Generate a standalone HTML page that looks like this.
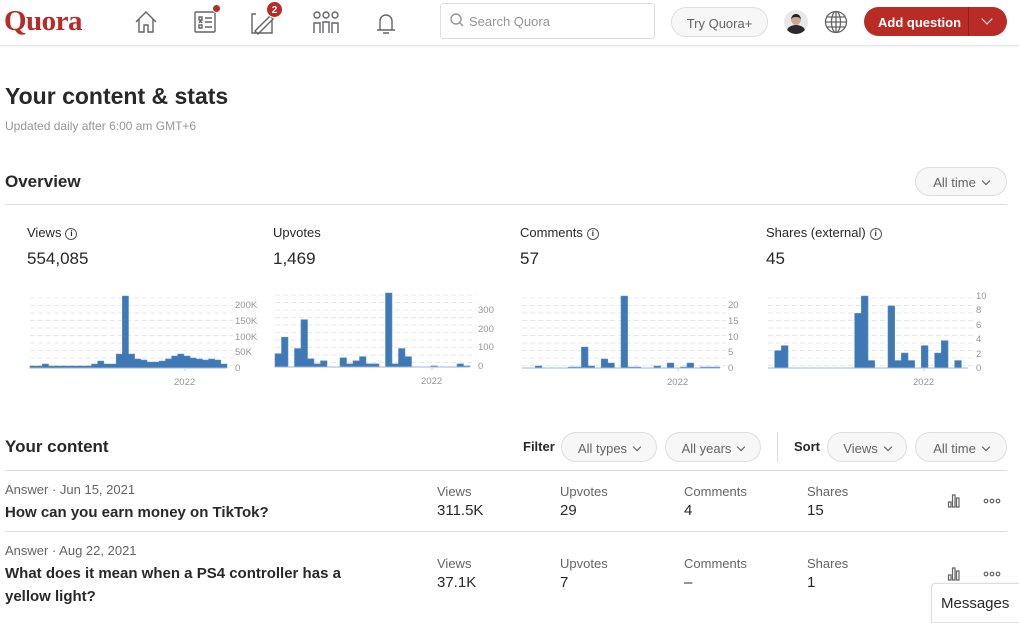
<!DOCTYPE html>
<html><head><meta charset="utf-8">
<style>
*{margin:0;padding:0;box-sizing:border-box}
body{width:1019px;height:615px;overflow:hidden;background:#fff;font-family:"Liberation Sans",sans-serif;color:#282829;position:relative}
.a{position:absolute}
.hdr{position:absolute;left:0;top:0;width:1019px;height:46px;border-bottom:1px solid #e6e6e6;box-shadow:0 1px 2px rgba(0,0,0,.05)}
.logo{left:4px;top:5px;font-family:"Liberation Serif",serif;font-weight:bold;font-size:29px;color:#b92b27;letter-spacing:-0.5px}
.search{left:440px;top:3px;width:215px;height:36px;border:1px solid #dedede;border-radius:3px;font-size:13px;color:#939598;padding:10px 0 0 28px}
.pill{border:1px solid #dedede;border-radius:18px;background:#f7f7f7;font-size:13px;color:#636466;text-align:center}
.addq{left:864px;top:7px;width:143px;height:29px;border-radius:15px;background:#b92b27;color:#fff;font-weight:bold;font-size:13px;padding:8px 0 0 14px}
.h1{left:5px;top:83px;font-size:23px;font-weight:bold}
.sub{left:5px;top:119px;font-size:12px;color:#939598}
.h2{font-size:17px;font-weight:bold}
.line{height:1px;background:#dedede}
.lbl{font-size:13px;color:#282829}
.num{font-size:17px}
.sm{font-size:13px;color:#636466}
.title{font-size:15px;font-weight:bold;line-height:23px}
.axis{font-size:9.5px;fill:#939598;font-family:"Liberation Sans",sans-serif}
.info{display:inline-block;width:12px;height:12px;border:1.3px solid #555;border-radius:50%;font-size:8px;text-align:center;line-height:9px;vertical-align:1px;margin-left:4px;font-weight:bold}
.chev{display:inline-block;width:6px;height:6px;border-right:1.3px solid #555;border-bottom:1.3px solid #555;transform:rotate(45deg);margin:0 0 3px 7px}
</style></head><body>
<div class="hdr">
<div class="a logo">Quora</div>
<svg class="a" style="left:133px;top:8px" width="280" height="30" fill="none" stroke="#636466" stroke-width="1.4">
 <path d="M3 14 L13 4 L23 14 M6 11 V24 H11 V17 H15 V24 H20 V11"/>
 <rect x="62" y="4" width="20" height="20" rx="1"/><path d="M66 9h3v3h-3zM66 17h3v3h-3zM72 10h7M72 14h7M72 19h7M66 15l1.5-2 1.5 2"/>
 <path d="M123 6 H119 V25 H139 V12 M122 23 L137 8 L140 11 L125 26 Z"/>
 <circle cx="184" cy="7" r="3"/><circle cx="193" cy="7" r="3"/><circle cx="202" cy="7" r="3"/><path d="M181 25v-10h6v10M190 25v-11h6v11M199 25v-10h6v10"/>
 <path d="M247 22 V13 a6 6 0 0 1 12 0 V22 H244 H262 M250 25 h6"/>
</svg>
<div class="a" style="left:212px;top:4px;width:9px;height:9px;border-radius:50%;background:#b92b27;border:1px solid #fff"></div>
<div class="a" style="left:266px;top:1px;width:17px;height:17px;border-radius:50%;background:#b92b27;color:#fff;font-size:10px;font-weight:bold;text-align:center;line-height:17px;border:1px solid #fff">2</div>
<div class="a search">Search Quora</div>
<svg class="a" style="left:450px;top:13px" width="14" height="14" fill="none" stroke="#939598" stroke-width="1.4"><circle cx="6" cy="6" r="5"/><path d="M9.5 9.5L13 13"/></svg>
<div class="a pill" style="left:671px;top:7px;width:97px;height:30px;padding-top:8px">Try Quora+</div>
<div class="a" style="left:784px;top:10px;width:24px;height:24px;border-radius:50%;background:#e8e8e8;overflow:hidden"><div style="position:absolute;left:7px;top:4px;width:10px;height:11px;border-radius:50%;background:#c9a894;border-top:3px solid #222"></div><div style="position:absolute;left:3px;top:15px;width:18px;height:12px;border-radius:50%;background:#2a2a2a"></div></div>
<svg class="a" style="left:824px;top:10px" width="24" height="24" fill="none" stroke="#636466" stroke-width="1.3"><circle cx="12" cy="12" r="10.5"/><ellipse cx="12" cy="12" rx="4.5" ry="10.5"/><path d="M1.5 12h21M3.5 7h17M3.5 17h17M12 1.5v21"/></svg>
<div class="a addq">Add question</div>
<div class="a" style="left:968px;top:7px;width:1px;height:29px;background:#8f1f1c"></div>
<div class="a" style="left:983px;top:15px;width:8px;height:8px;border-right:1.5px solid #fff;border-bottom:1.5px solid #fff;transform:rotate(45deg)"></div>
</div>

<div class="a h1">Your content &amp; stats</div>
<div class="a sub">Updated daily after 6:00 am GMT+6</div>
<div class="a h2" style="left:5px;top:172px">Overview</div>
<div class="a pill" style="left:915px;top:167px;width:92px;height:29px;padding-top:7px">All time<span class="chev"></span></div>
<div class="a line" style="left:5px;top:204px;width:1002px"></div>

<div class="a lbl" style="left:27px;top:225px">Views<span class="info">i</span></div>
<div class="a num" style="left:27px;top:249px">554,085</div>
<div class="a lbl" style="left:273px;top:225px">Upvotes</div>
<div class="a num" style="left:273px;top:249px">1,469</div>
<div class="a lbl" style="left:520px;top:225px">Comments<span class="info">i</span></div>
<div class="a num" style="left:520px;top:249px">57</div>
<div class="a lbl" style="left:766px;top:225px">Shares (external)<span class="info">i</span></div>
<div class="a num" style="left:766px;top:249px">45</div>

<svg class="a" id="ch" style="left:0;top:285px" width="1019" height="110"></svg>

<div class="a h2" style="left:5px;top:437px">Your content</div>
<div class="a" style="left:523px;top:439px;font-size:13px;font-weight:bold;color:#282829">Filter</div>
<div class="a pill" style="left:561px;top:432px;width:96px;height:30px;padding-top:8px">All types<span class="chev"></span></div>
<div class="a pill" style="left:665px;top:432px;width:96px;height:30px;padding-top:8px">All years<span class="chev"></span></div>
<div class="a" style="left:777px;top:432px;width:1px;height:30px;background:#dedede"></div>
<div class="a" style="left:794px;top:439px;font-size:13px;font-weight:bold">Sort</div>
<div class="a pill" style="left:827px;top:432px;width:80px;height:30px;padding-top:8px">Views<span class="chev"></span></div>
<div class="a pill" style="left:915px;top:432px;width:92px;height:30px;padding-top:8px">All time<span class="chev"></span></div>
<div class="a line" style="left:5px;top:470px;width:1002px"></div>

<div class="a sm" style="left:5px;top:482px">Answer · Jun 15, 2021</div>
<div class="a title" style="left:5px;top:501px">How can you earn money on TikTok?</div>
<div class="a sm" style="left:437px;top:484px">Views</div><div class="a num" style="left:437px;top:502px;font-size:15px">311.5K</div>
<div class="a sm" style="left:560px;top:484px">Upvotes</div><div class="a num" style="left:560px;top:502px;font-size:15px">29</div>
<div class="a sm" style="left:684px;top:484px">Comments</div><div class="a num" style="left:684px;top:502px;font-size:15px">4</div>
<div class="a sm" style="left:807px;top:484px">Shares</div><div class="a num" style="left:807px;top:502px;font-size:15px">15</div>
<div class="a line" style="left:5px;top:531px;width:1002px"></div>

<div class="a sm" style="left:5px;top:543px">Answer · Aug 22, 2021</div>
<div class="a title" style="left:5px;top:562px">What does it mean when a PS4 controller has a<br>yellow light?</div>
<div class="a sm" style="left:437px;top:556px">Views</div><div class="a num" style="left:437px;top:574px;font-size:15px">37.1K</div>
<div class="a sm" style="left:560px;top:556px">Upvotes</div><div class="a num" style="left:560px;top:574px;font-size:15px">7</div>
<div class="a sm" style="left:684px;top:556px">Comments</div><div class="a num" style="left:684px;top:574px;font-size:15px">–</div>
<div class="a sm" style="left:807px;top:556px">Shares</div><div class="a num" style="left:807px;top:574px;font-size:15px">1</div>

<svg class="a" style="left:945px;top:491px" width="60" height="100" fill="none" stroke="#636466" stroke-width="1.2">
 <path d="M3.5 16V11h2.5v5zM7.5 16V4h2.5v12zM11.5 16V7h2.5v9z"/>
 <circle cx="41" cy="10" r="1.8"/><circle cx="47" cy="10" r="1.8"/><circle cx="53" cy="10" r="1.8"/>
 <path d="M3.5 89V84h2.5v5zM7.5 89V77h2.5v12zM11.5 89V80h2.5v9z"/>
 <circle cx="41" cy="83" r="1.8"/><circle cx="47" cy="83" r="1.8"/><circle cx="53" cy="83" r="1.8"/>
</svg>
<div class="a" style="left:931px;top:583px;width:95px;height:40px;border:1px solid #dedede;border-radius:4px 0 0 0;background:#fff;font-size:15px;padding:11px 0 0 9px;box-shadow:0 0 3px rgba(0,0,0,.08)">Messages</div>

<script>
var s=document.getElementById('ch'),h='';
function chart(x0,x1,base,top,data,labels,lx,yr){
 for(var y=top+2;y<base;y+=7.5)h+='<line x1="'+x0+'" x2="'+(x1+6)+'" y1="'+y+'" y2="'+y+'" stroke="#e8e8e8" stroke-dasharray="5,3"/>';
 var m=Math.max.apply(0,data),w=(x1-x0)/data.length;
 h+='<path d="M'+x0+' '+base;
 data.forEach(function(v,i){var yy=base-v/m*(base-top);h+=' L'+(x0+i*w)+' '+yy+' L'+(x0+(i+1)*w)+' '+yy;});
 h+=' L'+x1+' '+base+'Z" fill="#3e79b6" stroke="#5b8fc7" stroke-width="0.6"/>';
 h+='<line x1="'+x0+'" x2="'+x1+'" y1="'+base+'" y2="'+base+'" stroke="#9cb7d6"/>';
 labels.forEach(function(l){h+='<text class="axis" x="'+(x1+8)+'" y="'+(l[1]+3)+'">'+l[0]+'</text>';});
 h+='<line x1="'+yr+'" x2="'+yr+'" y1="'+base+'" y2="'+(base+3)+'" stroke="#ccc"/><text class="axis" x="'+(yr-11)+'" y="'+(base+17)+'">2022</text>';
}
chart(30,227,83,11,[2,2,4,2,2,2,2,2,2,2,4,7,4,4,14,72,14,9,8,6,6,7,9,12,14,12,10,9,8,9,8,4],[["200K",20],["150K",36],["100K",52],["50K",67],["0",83]],0,185);
chart(275,470,82,8,[13,29,0,18,46,8,3,6,0,0,9,3,6,10,3,3,0,72,3,18,10,0,0,0,1,0,0,0,3,1],[["300",25],["200",44],["100",62],["0",81]],0,432);
chart(522,720,83,11,[0,0,2,0,0,0,0,1,1,21,2,0,9,5,0,72,1,1,0,0,2,0,5,0,1,5,0,1,1,1],[["20",20],["15",36],["10",52],["5",67],["0",83]],0,678);
chart(768,968,83,11,[0,7,9,0,0,0,0,0,0,0,0,0,0,22,29,3,0,0,25,3,6,3,0,9,0,6,11,0,3,0],[["10",11],["8",25],["6",40],["4",54],["2",69],["0",83]],0,924);
s.innerHTML=h;
</script>
</body></html>
